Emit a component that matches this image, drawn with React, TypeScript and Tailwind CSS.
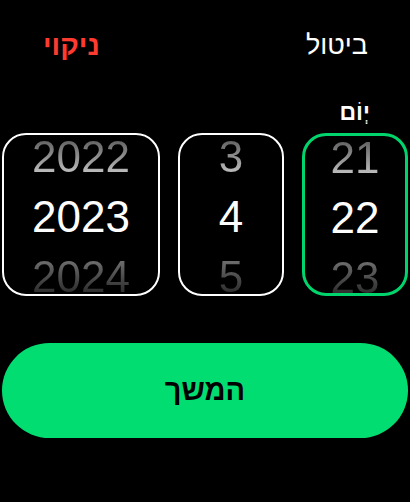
import React from "react";

const FONT = { fontFamily: '"Liberation Sans", Arial, sans-serif' };

function Wheel({ values, width, active }: { values: string[]; width: string; active?: boolean }) {
  return (
    <div
      className={`${width} h-[163px] rounded-[24px] flex flex-col items-center gap-[16px] ${
        active ? "border-[3px] border-[#00d46c]" : "border-2 border-white"
      }`}
    >
      <span className="text-[44px] leading-[44px] bg-gradient-to-b from-[#555] to-[#d0d0d0] bg-clip-text text-transparent">
        {values[0]}
      </span>
      <span className="text-[44px] leading-[44px] text-white">{values[1]}</span>
      <span className="text-[44px] leading-[44px] bg-gradient-to-b from-[#7a7a7a] to-[#222] bg-clip-text text-transparent">
        {values[2]}
      </span>
    </div>
  );
}

export default function App() {
  return (
    <div dir="rtl" style={FONT} className="w-[410px] h-[502px] bg-black text-white overflow-hidden">
      <div className="flex justify-between items-center pr-[42px] pl-[43px] pt-[28px] h-[62px]">
        <button className="text-[27px] text-white">ביטול</button>
        <button className="text-[28.5px] font-bold text-[#ff3b30]">ניקוי</button>
      </div>
      <div className="flex justify-start pr-[40px] mt-[33px] h-[35px]">
        <span className="text-[23px] font-bold">יְוֹם</span>
      </div>
      <div className="flex gap-[18px] px-[2px] mt-[3px]">
        <Wheel values={["21", "22", "23"]} width="w-[106px]" active />
        <Wheel values={["3", "4", "5"]} width="w-[106px]" />
        <Wheel values={["2022", "2023", "2024"]} width="w-[158px]" />
      </div>
      <div className="px-[2px] mt-[47px]">
        <button className="w-full h-[95px] rounded-full bg-[#02dd72] text-black text-[29px] font-bold flex items-center justify-center">
          המשך
        </button>
      </div>
    </div>
  );
}
